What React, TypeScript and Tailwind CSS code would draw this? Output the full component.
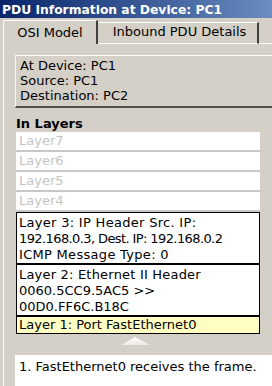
const INACTIVE_LAYERS = ['Layer7', 'Layer6', 'Layer5', 'Layer4']

const INFO = ['At Device: PC1', 'Source: PC1', 'Destination: PC2']

function Triangle() {
  return (
    <svg width="30" height="9" viewBox="0 0 30 9" className="ml-[117px] mt-[3px] block">
      <defs>
        <linearGradient id="tri" x1="0" y1="0" x2="0" y2="1">
          <stop offset="0%" stopColor="#ffffff" />
          <stop offset="100%" stopColor="#ecebe6" />
        </linearGradient>
      </defs>
      <polygon points="14,0 29,8 0,8" fill="url(#tri)" />
    </svg>
  )
}

export default function App() {
  return (
    <div className="w-[272px] h-[386px] overflow-hidden bg-[#d4d0c8] text-black font-['DejaVu_Sans',Verdana,sans-serif] text-[13px]">
      {/* Title bar */}
      <div className="h-[18px] overflow-hidden pl-[2px] pt-[3px] bg-gradient-to-r from-[#0a246a] to-[#6b8dc0] text-white font-bold text-[12.3px] leading-[15px] whitespace-nowrap">
        PDU Information at Device: PC1
      </div>

      {/* Tabs */}
      <div className="flex h-[26px] items-end pl-[3px]">
        <div className="h-[24px] w-[95px] rounded-tl-[2px] border-l border-t border-r-2 border-l-white border-t-white border-r-[#404040] pt-[4px] text-center leading-[16px]">
          OSI Model
        </div>
        <div className="h-[22px] w-[161px] border-t border-b border-r-2 border-t-white border-b-white border-r-[#404040] pt-[1px] pl-[4px] text-center leading-[16px]">
          Inbound PDU Details
        </div>
        <div className="h-[1px] flex-1 bg-white" />
      </div>

      {/* Panel */}
      <div className="ml-[3px] border-l border-white pt-[11px]">
        <div className="ml-[11px] w-[300px] border-t border-l border-b-2 border-t-white border-l-[#f4f4f4] border-b-[#505050] pl-[4px] pt-[2px] pb-[3px] leading-[15px]">
          {INFO.map((line) => (
            <div key={line}>{line}</div>
          ))}
        </div>

        <p className="mt-[8px] ml-[12px] font-bold leading-[16px]">In Layers</p>

        <div className="ml-[12px] w-[244px]">
          {INACTIVE_LAYERS.map((l) => (
            <div
              key={l}
              className="h-[20px] border-b-2 border-[#c8c8c8] bg-white pl-[3px] leading-[18px] text-[#c4c4c4]"
            >
              {l}
            </div>
          ))}
          <div className="border border-black bg-white pl-[2px] pt-[2px] leading-[16px] whitespace-nowrap">
            <div className="tracking-[0.3px]">Layer 3: IP Header Src. IP:</div>
            <div className="tracking-[-0.6px]">192.168.0.3, Dest. IP: 192.168.0.2</div>
            <div className="tracking-[0.3px]">ICMP Message Type: 0</div>
          </div>
          <div className="border border-black bg-white pl-[2px] pt-[2px] leading-[16px] whitespace-nowrap">
            <div className="tracking-[0.2px]">Layer 2: Ethernet II Header</div>
            <div>0060.5CC9.5AC5 &gt;&gt;</div>
            <div>00D0.FF6C.B18C</div>
          </div>
          <div className="border border-black bg-[#ffffc4] pl-[2px] leading-[16px] whitespace-nowrap">
            Layer 1: Port FastEthernet0
          </div>
        </div>

        <div className="h-[18px]">
          <Triangle />
        </div>

        <div className="ml-[11px] w-[300px] h-[31px] bg-white pl-[4px] pt-[4px] leading-[16px] whitespace-nowrap">
          1. FastEthernet0 receives the frame.
        </div>
      </div>
    </div>
  )
}
